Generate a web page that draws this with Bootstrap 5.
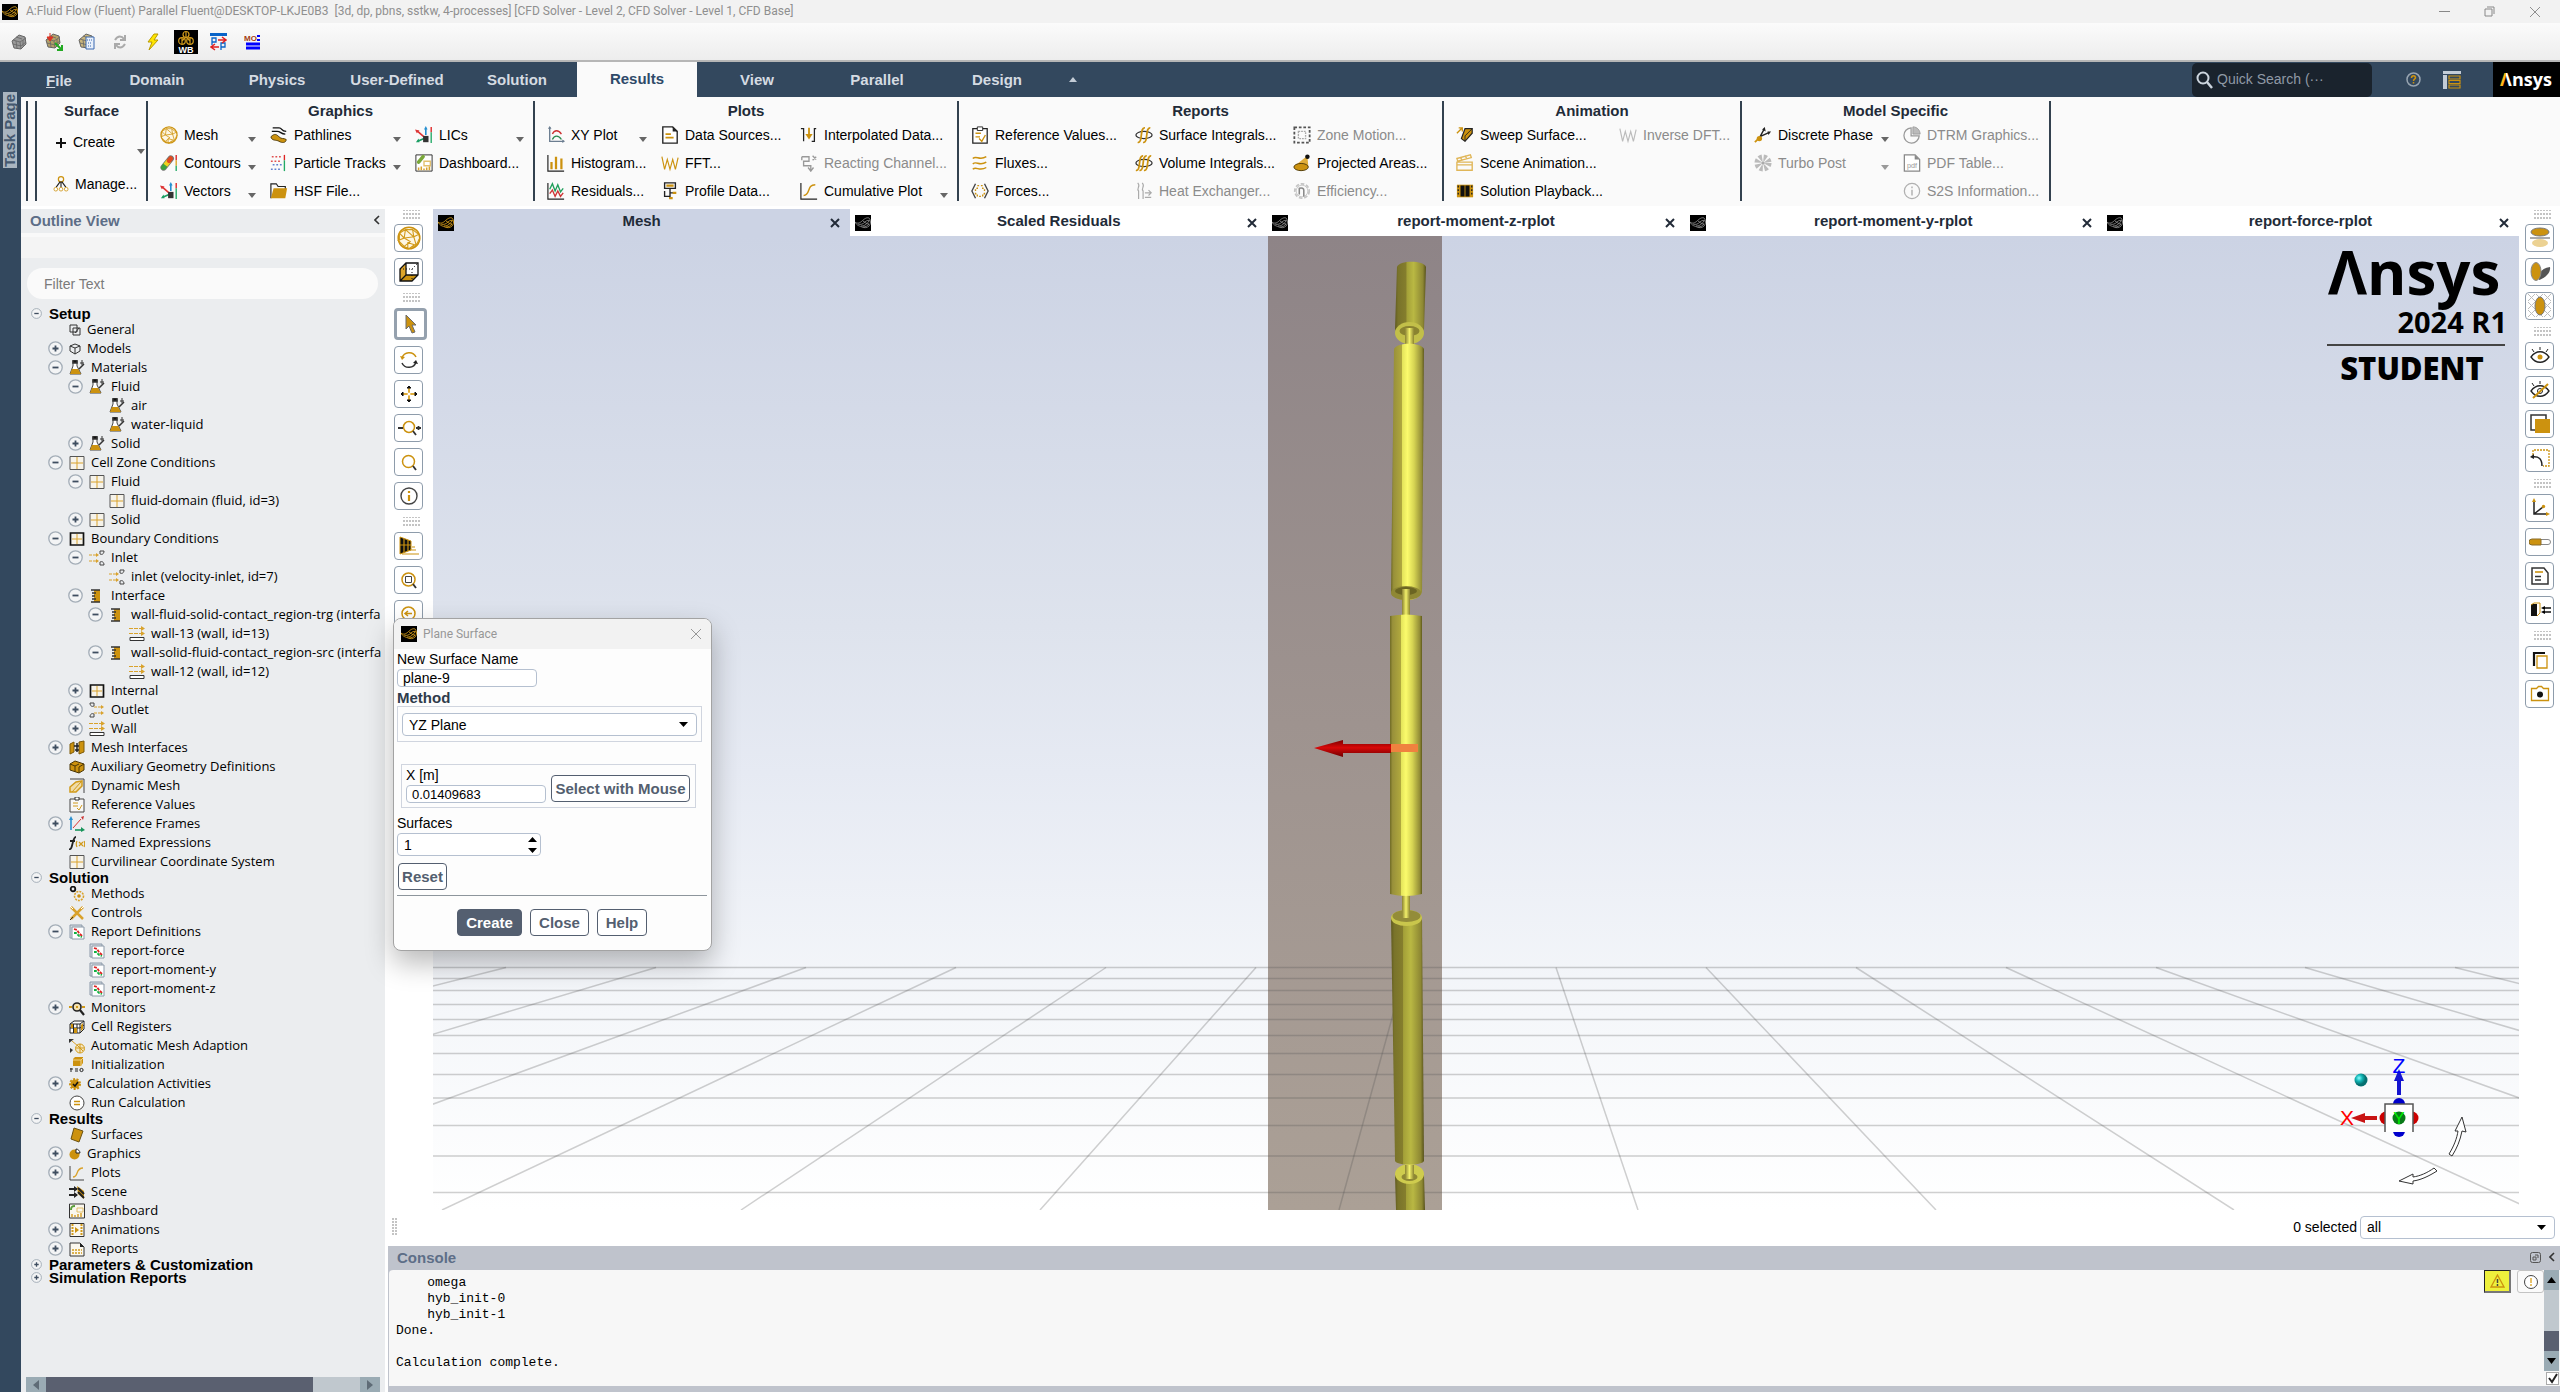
<!DOCTYPE html>
<html lang="en">
<head>
<meta charset="utf-8">
<meta name="viewport" content="width=device-width, initial-scale=1">
<title>A:Fluid Flow (Fluent) Parallel Fluent</title>
<link href="https://cdn.jsdelivr.net/npm/bootstrap@5.3.0/dist/css/bootstrap.min.css" rel="stylesheet">
<style>
:root{--navy:#33485e;--gold:#cc920f;--ink:#222b38;--slate:#545f70}
html,body{height:100%}
body{font-family:"Liberation Sans",Arial,sans-serif;font-size:14px;line-height:19px;color:#000;background:#fff;overflow:hidden}
svg{display:block;flex:none}
button{font:inherit;color:inherit;background:none;border:0;padding:0}
.titlebar{height:23px;background:#f2f2f2;color:#8f8f8f;font-family:Roboto,sans-serif;font-size:12px;padding-left:2px}
.titlebar .winctl{gap:34px;padding-right:19px}
.quickbar{height:39px;background:linear-gradient(#fbfbfb,#ededed);border-bottom:2px solid #b6b6b6;padding:1px 0 0 9px}
.quickbar button{width:33px;display:flex;justify-content:center;align-items:center}
.quickbar button.lead-btn{width:20px;margin-right:8px}
.menubar{height:35px;background:var(--navy);color:#d5dbe2;font-size:15px;font-weight:700}
.menubar .nav-link{width:120px;height:35px;padding:0;line-height:36px;text-align:center;color:#d5dbe2}
.menubar .nav-link.file-link{width:76px;margin-left:21px;line-height:38px}
.menubar .nav-link.active{background:#fafafa;color:#2f4a69;line-height:34px}
.quick-search{width:180px;height:34px;background:#1a232d;border-radius:5px;padding-left:4px;gap:4px;margin-right:33px}
.quick-search input{background:none;border:0;outline:0;color:#8f99a5;font-size:14px;width:150px;padding:0}
.quick-search input::placeholder{color:#8f99a5;opacity:1}
.layout-btn{margin-left:21px}
.brand-box{width:67px;height:35px;background:#000;margin-left:32px}
.rail{width:21px;background:var(--navy)}
.rail button{writing-mode:vertical-rl;transform:rotate(180deg);width:14px;height:76px;line-height:14px;margin:-5px 0 0 3px;background:#a9b5c0;color:#44586f;font-size:15px;font-weight:700;text-align:center;white-space:nowrap}
.ribbon{height:109px;background:#fafafa;padding:4px 0 5px 5px;margin-bottom:3px}
.rgroup{border-right:2px solid #33414f}
.rgroup h2{font-size:15px;font-weight:700;line-height:20px;margin:0 0 0 -12px;color:var(--ink);text-align:center}
.rgrid{display:grid;grid-auto-flow:column;grid-template-rows:repeat(3,28px);column-gap:12px}
.rgrid button,.surf button{display:flex;align-items:center;gap:6px;white-space:nowrap;text-align:left}
.rgrid button:disabled{color:#8b8b8b}
.rgrid svg.car{margin:8px 2px 0 auto}
.g-surf{width:111px}.g-surf h2{margin-left:0}
.surf .create-btn{margin:12px 0 22px}.surf .surf-car{margin:28px 12px 0 auto}
.g-graph{padding:0 8px 0 12px;width:387px}.g-graph h2{margin-right:-8px}.g-graph .rgrid{grid-template-columns:98px 133px 111px}
.g-plot{padding-left:12px;width:424px}.g-plot .rgrid{grid-template-columns:102px 127px 150px}
.g-rep{padding-left:12px;width:485px}.g-rep .rgrid{grid-template-columns:152px 146px 140px}
.g-anim{padding-left:12px;width:298px}.g-anim .rgrid{grid-template-columns:151px 110px}
.g-model{padding-left:12px;width:309px}.g-model .rgrid{grid-template-columns:137px 134px}
.rule-start{width:11px;border-left:2px solid #33414f;border-right:2px solid #33414f}
.outline{width:364px;background:#ebedef}
.panel-head{height:24px;color:#5d6e87;font-size:15px;font-weight:700;padding:0 5px 2px 9px}
.outline-strip{height:25px;border-top:4px solid #f9f9f9;background:#f4f4f4}
.filter-box{height:31px;margin:10px 7px 6px 6px;border:0;border-radius:16px;background:#fafafa;padding:0 17px;font-size:14px;outline:0}
.filter-box::placeholder{color:#7b7b7b;opacity:1}
.tree{list-style:none;margin:0;padding:2px 6px 0 0;font-family:"Open Sans",sans-serif;font-size:13px;line-height:19px;overflow:hidden}
.tree li{display:flex;align-items:center;gap:6px;height:19px;white-space:nowrap}
.tree li.top{height:13px;padding-left:10px;gap:7px;font-family:"Liberation Sans",sans-serif;font-size:15px;font-weight:700;line-height:13px}
.tree .l1{padding-left:27px}.tree .l2{padding-left:47px}.tree .l3{padding-left:67px}
.tree .l1.leaf{padding-left:48px}.tree .l2.leaf{padding-left:68px}.tree .l3.leaf{padding-left:88px}.tree .l4.leaf{padding-left:108px}
.hscroll{height:15px;margin:0 5px;background:#c0c8ce}
.hscroll button{width:20px;background:#9aabb4;display:flex;align-items:center;justify-content:center}
.thumb-x{width:267px;background:#5a6070}
.toolcol{width:48px;padding:0 0 0 9px;gap:6px}
.toolcol .grip{margin:1px 0 -1px 9px;height:10px}
.toolcol.rightcol{width:41px;padding-left:6px}
.toolcol .grip:first-child{margin-bottom:-2px}
.toolcol button{width:29px;height:28px;flex:none;border:1px solid #8e9cab;border-radius:4px;background:#fff;display:flex;align-items:center;justify-content:center}
.toolcol button.active{width:33px;height:32px;border:3px solid #95a1ae}
.grip{width:18px;height:6px;background:radial-gradient(circle at 1px 1px,#c4c4c4 1px,transparent 1px) 0 3px/3px 4px;}
.vtabs{height:27px}
.vtab{flex:1 1 0;padding:0 9px 0 5px;font-size:15px;font-weight:700;color:var(--ink)}
.vtab.active{background:#ccd3e4}
.vtab svg{position:relative}
.vtab .ttl{flex:1;text-align:center;line-height:22px;padding-bottom:3px}
.scene{flex:1 1 0;min-height:0;width:100%}
.statusrow{height:36px;padding:0 5px 2px 7px}
.statusrow .gripv{width:6px;height:18px;background:radial-gradient(circle at 1px 1px,#c4c4c4 1px,transparent 1px) 0 0/3px 3px}
.plain-select,.plain-field{border:1px solid #b5c0d0;border-radius:4px;background-color:#fff;color:#000;font-size:14px;line-height:16px;height:18px;padding:0 5px;outline:0}
.plain-select{appearance:none;height:23px;padding-left:6px;background-image:url("data:image/svg+xml,%3Csvg xmlns='http://www.w3.org/2000/svg' width='9' height='5'%3E%3Cpath d='M0 0h9L4.500 5z'/%3E%3C/svg%3E");background-repeat:no-repeat;background-position:right 8px center}
.statusrow .plain-select{width:195px;margin-left:3px}
.console{margin-left:3px;height:146px;background:#bfc3cc;padding:0 0 6px 1px}
.console-body{background:#f7f7f7;border-radius:4px 0 0 0;padding-right:1px}
.console pre{margin:0;padding:5px 0 0 7px;font-family:"Liberation Mono",monospace;font-size:13px;line-height:16px;color:#000;overflow:hidden}
.msg-btn{width:27px;height:23px;display:flex;align-items:center;justify-content:center;border-radius:3px}
.msg-warn{background:#eef03c;border:1px solid #222;border-right:2px solid #777;border-bottom:2px solid #777;border-radius:0;margin-right:6px}
.msg-info{border:1px solid #c3c3c3;background:#fafafa}
.vscroll{width:15px;height:101px;background:#c0c8ce}
.vscroll button{height:20px;background:#9aabb4;display:flex;align-items:center;justify-content:center}
.thumb-y{height:20px;margin-top:auto;background:#5a6070}
.tickbox{appearance:none;width:13px;height:13px;margin:1px 0 0 2px;border:1px solid #aaa;background:#fff url("data:image/svg+xml,%3Csvg xmlns='http://www.w3.org/2000/svg' width='11' height='11'%3E%3Cpath d='M2 5l3 4 5-8' fill='none' stroke='%23222' stroke-width='2'/%3E%3C/svg%3E")}
.dlg{position:absolute;left:393px;top:618px;width:319px;background:#fdfdfd;border:1px solid #a3a3a3;border-radius:8px;box-shadow:0 12px 28px rgba(0,0,0,.28);z-index:5;overflow:hidden}
.dlg-title{height:30px;background:#f2f2f2;color:#979797;font-family:Roboto,sans-serif;font-size:12px;padding:0 9px 0 7px;gap:6px}
.dlg-body{padding:1px 4px 14px 3px}
.dlg label,.dlg .lbl{display:block;line-height:19px}
.dlg .lbl{font-weight:700;font-size:15px;color:#2f3b4b;padding-top:3px;line-height:16px}
.dlg .plain-field{width:140px;display:block}
.boxed{border:1px solid #d0d5df}
.box-method{width:305px;padding:6px 4px 5px}
.box-method .plain-select{width:100%;display:block}
.box-x{width:295px;margin:22px 0 6px 4px;padding:1px 4px 4px}
.box-x .w-mouse{margin:0 0 1px 5px}
.plain-field.digits{font-size:13px}
.dlg .plain-field.spin{width:144px;height:23px;padding-left:6px;appearance:textfield;background:#fff url("data:image/svg+xml,%3Csvg xmlns='http://www.w3.org/2000/svg' width='9' height='16'%3E%3Cpath d='M0 5h9L4.500 0zM0 11h9L4.500 16z'/%3E%3C/svg%3E") no-repeat right 3px center}
.spin::-webkit-inner-spin-button{appearance:none;margin:0}
.dbtn{height:27px;border:1px solid var(--slate);border-radius:4px;background:#fff;color:var(--slate);font-size:15px;font-weight:700;line-height:25px;padding:0;white-space:nowrap}
.dbtn.prime{background:var(--slate);color:#fff}
.dlg hr{margin:5px 0 13px;opacity:1;border-top:1px solid #8d959c;width:310px}
.w-mouse{width:139px}.w-reset{width:49px;margin:7px 0 0 1px}.w-create{width:65px}.w-close{width:59px}.w-help{width:50px}
</style>
<script src="https://cdn.jsdelivr.net/npm/bootstrap@5.3.0/dist/js/bootstrap.bundle.min.js"></script>
</head>
<body class="d-flex flex-column">
<svg width="0" height="0" class="position-absolute" aria-hidden="true">
<defs>
<symbol id="logo" viewBox="0 0 16 16"><path fill="#000" d="M0 0h16v16H0z"/><path d="M0 7c2 2 5 1 7-1s5-4 7-3c2 2 2 6 0 8s-5 2-7 1-5-1-7-5M3 9c3 1 5 0 7-2s4-2 5-1M6 11c3 0 5-1 8-5M8 12c3 0 4-1 6-3M8 6c2 1 3 3 6 3" fill="none" stroke="currentColor" stroke-width=".9"/></symbol>
<symbol id="x" viewBox="0 0 12 12"><path d="M1 1l10 10M11 1L1 11" fill="none" stroke="currentColor"/></symbol>
<symbol id="xb" viewBox="0 0 12 12"><path d="M2 2l8 8M10 2l-8 8" fill="none" stroke="currentColor" stroke-width="2"/></symbol>
<symbol id="caret" viewBox="0 0 8 5"><path d="M0 0h8L4 5z" fill="currentColor"/></symbol>
<symbol id="lt" viewBox="0 0 6 10"><path d="M5 1L1 5l4 4" fill="none" stroke="#333" stroke-width="1.600"/></symbol>
<symbol id="plus" viewBox="0 0 15 15"><circle cx="7.500" cy="7.500" r="6.700" fill="#f3f4f5" stroke="#a3adb7" stroke-width="1.300"/><path d="M4.500 7.500h6M7.500 4.500v6" stroke="#3f4e60" stroke-width="1.800"/></symbol>
<symbol id="minus" viewBox="0 0 15 15"><circle cx="7.500" cy="7.500" r="6.700" fill="#f3f4f5" stroke="#a3adb7" stroke-width="1.300"/><path d="M4.500 7.500h6" stroke="#3f4e60" stroke-width="1.800"/></symbol>
<!-- tree icons -->
<symbol id="t-gen" viewBox="0 0 12 12"><path d="M1 1h7v7H1zM4 4h7v7H4z" fill="none" stroke="#333"/><path d="M6 9l4-5" stroke="#333"/></symbol>
<symbol id="t-cube" viewBox="0 0 12 12"><path d="M6 1l5 2v5l-5 3-5-3V3zM1 3l5 2 5-2M6 5v6" fill="none" stroke="#333"/></symbol>
<symbol id="t-flask" viewBox="0 0 16 16"><path d="M4 1h4v5l4 8H1l3-8z" fill="#fff" stroke="#444"/><path d="M3 9h6l3 5H1z" fill="#cc920f"/><path d="M4 0h4v3H4zM10 9l5-5" fill="#111" stroke="#333" stroke-width="1.500"/><path d="M13 0v5M11 3h4" stroke="#333"/></symbol>
<symbol id="t-zone" viewBox="0 0 16 16"><path d="M1 1.500h14v13H1z" fill="#f6f3ea" stroke="#555"/><path d="M8 2v12M2 8h12" stroke="#d9a22c"/></symbol>
<symbol id="t-bound" viewBox="0 0 16 16"><path d="M1.500 2h13v12h-13z" fill="#f6f3ea" stroke="#111" stroke-width="1.700"/><path d="M8 3v10M3 8h10" stroke="#d9a22c"/></symbol>
<symbol id="t-in" viewBox="0 0 16 16"><path d="M0 5h8M0 11h8" stroke="#d9a22c" stroke-dasharray="3 1"/><path d="M7 3l3 2-3 2zM7 9l3 2-3 2z" fill="#d9a22c"/><path d="M11 1h4c0 3-2 4-4 3zM11 15h4c0-3-2-4-4-3z" fill="none" stroke="#444"/></symbol>
<symbol id="t-out" viewBox="0 0 16 16"><path d="M5 5h8M5 11h8" stroke="#d9a22c" stroke-dasharray="3 1"/><path d="M12 3l3 2-3 2zM12 9l3 2-3 2z" fill="#d9a22c"/><path d="M5 1H1c0 3 2 4 4 3zM5 15H1c0-3 2-4 4-3z" fill="none" stroke="#444"/></symbol>
<symbol id="t-intf" viewBox="0 0 16 16"><path d="M5 2h6v12H5z" fill="#cc920f"/><path d="M2 2h9M2 14h9M3 5h4M3 11h4M3 8h3" stroke="#333" stroke-width="1.300"/></symbol>
<symbol id="t-wall" viewBox="0 0 16 16"><path d="M0 2.500h12M0 7.500h12" stroke="#d9a22c" stroke-dasharray="4 1"/><path d="M12 0l4 2.500-4 2.500zM12 5l4 2.500-4 2.500z" fill="#d9a22c"/><path d="M1 11.500h14v3H1z" fill="#fff" stroke="#333"/></symbol>
<symbol id="t-mi" viewBox="0 0 16 16"><path d="M1 4l4-2v10l-4 2zM10 2l5-1v11l-5 2z" fill="#cc920f" stroke="#7c5a0a"/><path d="M5 6h5M6 10h4M8 3v9" stroke="#222" stroke-width="1.500"/></symbol>
<symbol id="t-aux" viewBox="0 0 16 16"><path d="M1 5l5-3 9 3v6l-5 3-9-3z" fill="#cc920f" stroke="#4b3707"/><path d="M1 5l5 2v6M6 7l4-2M10 8v6M10 8l5-3" fill="none" stroke="#4b3707"/></symbol>
<symbol id="t-dyn" viewBox="0 0 16 16"><path d="M1 1h14v14" fill="none" stroke="#444"/><path d="M1 9l6-5 6-1v5l-6 6H1z" fill="#f0dca8" stroke="#d19a1a" stroke-width="1.500"/><path d="M3 14l9-10" stroke="#d19a1a"/></symbol>
<symbol id="t-clip" viewBox="0 0 16 16"><path d="M1 2h14v13H1z" fill="#f7f7f7" stroke="#444"/><path d="M6 0h4v3H6z" fill="#fff" stroke="#333"/><path d="M4 6h5M4 9h5" stroke="#d19a1a"/><path d="M8 11l2 2 3-5" fill="none" stroke="#d19a1a"/></symbol>
<symbol id="t-frame" viewBox="0 0 16 16"><path d="M2 2v12" stroke="#2a8fd0" stroke-width="1.600"/><path d="M6 14h8" stroke="#17945a" stroke-width="1.600"/><path d="M4 12l8-9" stroke="#d33"/><path d="M0 4l2-4 2 4z" fill="#2a8fd0"/><path d="M12 1l3-1-1 4z" fill="#c33"/><path d="M12 11l4 3-4 2z" fill="#17945a"/></symbol>
<symbol id="t-fx" viewBox="0 0 16 16"><path d="M0 14c4 2 3-12 7-12M1 6h5" fill="none" stroke="#222" stroke-width="1.800"/><path d="M8 6c-1 2-1 4 0 6M15 6c1 2 1 4 0 6M10 7l4 4M14 7l-4 4" fill="none" stroke="#d19a1a" stroke-width="1.200"/></symbol>
<symbol id="t-gears" viewBox="0 0 16 16"><circle cx="4" cy="3" r="2.300" fill="none" stroke="#111" stroke-width="1.800"/><circle cx="10" cy="10" r="4.500" fill="none" stroke="#d9a22c" stroke-width="1.600" stroke-dasharray="2 1"/><circle cx="10" cy="10" r="1.800" fill="#cc920f"/></symbol>
<symbol id="t-tools" viewBox="0 0 16 16"><path d="M2 2l12 12M14 2L2 14" stroke="#d9a22c" stroke-width="2.500"/><path d="M1 1l3 3M12 4l3-3" stroke="#fff"/><path d="M1 15l3-3" stroke="#333"/></symbol>
<symbol id="t-rep" viewBox="0 0 16 16"><path d="M1 1h12v13H1z" fill="#d5dbe1" stroke="#8b99a8"/><path d="M3 3h12v12H3z" fill="#fff" stroke="#8b99a8"/><path d="M5 5l3 1 2 3 3 3" fill="none" stroke="#e02020" stroke-width="1.800" stroke-dasharray="3 1"/><path d="M5 9l2 0 3 3 3 1" fill="none" stroke="#10b040" stroke-width="1.800" stroke-dasharray="3 1"/></symbol>
<symbol id="t-mon" viewBox="0 0 16 16"><circle cx="8" cy="7" r="4" fill="#f3e1b0" stroke="#222" stroke-width="1.600"/><path d="M11 10l4 5" stroke="#222" stroke-width="2.200"/><path d="M0 7h3M13 7h3M7 7h2" stroke="#d19a1a" stroke-width="2"/></symbol>
<symbol id="t-cell" viewBox="0 0 16 16"><path d="M1 5l4-3h10v8l-4 4H1z" fill="#fff" stroke="#222"/><path d="M1 5h10v9M11 5l4-3M4.500 5v9M8 5v9M1 9h10l4-3" fill="none" stroke="#222"/><path d="M5 9h3v5H5zM2 5h2v4H2zM12 6l2-2v6l-2 2z" fill="#cc920f"/></symbol>
<symbol id="t-ama" viewBox="0 0 16 16"><path d="M0 1h5l-5 4zM1 10l3 2-3 3z" fill="#333"/><path d="M3 3l6 5" stroke="#d9a22c"/><circle cx="11" cy="10.500" r="4.500" fill="#f4e6c2" stroke="#d19a1a"/><path d="M7 10h8M11 6v9M8 7l6 6" stroke="#d19a1a"/></symbol>
<symbol id="t-init" viewBox="0 0 16 16"><path d="M4 2l2-2h8v6l-2 3H4z" fill="#cc920f"/><path d="M4 3h8v6M12 3l2-2" fill="none" stroke="#f3d488"/><path d="M2 11v4M1 12h3M6 12h3M6 14h3" stroke="#222"/><circle cx="12.500" cy="13" r="1.600" fill="none" stroke="#222"/></symbol>
<symbol id="t-act" viewBox="0 0 12 12"><circle cx="6" cy="6" r="4.500" fill="#cc920f"/><circle cx="6" cy="6" r="5" fill="none" stroke="#cc920f" stroke-width="2" stroke-dasharray="2 1.500"/><path d="M4 6l2 2 3-4" fill="none" stroke="#111" stroke-width="1.500"/></symbol>
<symbol id="t-run" viewBox="0 0 16 16"><circle cx="8" cy="8" r="7" fill="#fff" stroke="#444"/><path d="M5 6.500h6M5 9.500h6" stroke="#cc920f" stroke-width="1.500"/></symbol>
<symbol id="t-surf" viewBox="0 0 16 16"><path d="M5 1l9 3-4 11-8-3z" fill="#cc920f" stroke="#6b5212"/></symbol>
<symbol id="t-graph" viewBox="0 0 12 12"><circle cx="5.500" cy="6.500" r="5" fill="#cc920f"/><path d="M7 1v4h4c0-2-2-4-4-4z" fill="#fff" stroke="#222"/></symbol>
<symbol id="t-plot" viewBox="0 0 16 16"><path d="M1 1v14h14" fill="none" stroke="#444"/><path d="M4 12c6 0 2-9 10-9" fill="none" stroke="#d9a22c" stroke-width="1.300"/></symbol>
<symbol id="t-scene" viewBox="0 0 16 16"><path d="M0 5h8M0 11h8" stroke="#222" stroke-width="1.800"/><path d="M5 2l4 3-4 3zM5 8l4 3-4 3z" fill="#222"/><path d="M8 2l7 5v8l-6-5z" fill="#cc920f"/><path d="M9 4l6 6M9 8l6 6" stroke="#222" stroke-width="2"/></symbol>
<symbol id="t-dash" viewBox="0 0 16 16"><path d="M.5 1h15v14H.5z" fill="#faf7ee" stroke="#333"/><path d="M2 7c0-4 2-4 4-4" fill="none" stroke="#5a9e3a" stroke-width="2"/><path d="M8 5h6v4H8z" fill="none" stroke="#e2c06d"/><path d="M3 14v-3M6 14v-2M9 14v-3M12 14v-4" stroke="#d9a22c" stroke-width="1.500"/></symbol>
<symbol id="t-anim" viewBox="0 0 16 16"><path d="M1 1.500h14v13H1z" fill="#faf7ee" stroke="#333"/><path d="M3.500 2v12M12.500 2v12" stroke="#d19a1a" stroke-width="2" stroke-dasharray="2 1"/><path d="M6 5l4 3-4 3z" fill="#cc920f"/></symbol>
<symbol id="t-table" viewBox="0 0 16 16"><path d="M1 2h10l4 4v9H1z" fill="#faf7ee" stroke="#333"/><path d="M11 2v4h4z" fill="#222"/><path d="M3 9h10M3 12h10" stroke="#d19a1a" stroke-width="1.600" stroke-dasharray="2 1"/></symbol>
<!-- ribbon icons -->
<symbol id="r-mesh" viewBox="0 0 20 20"><circle cx="10" cy="10" r="9" fill="#fdf6e3" stroke="#cc920f" stroke-width="1.300"/><path d="M2 6l5-3 6 0 5 4-4 2-7-6-1 7-5 2 5 5 5-4-5-3 8-1 2 7-7-2 0 5 7-3 3-6M2 6l4 4M6 17l4 2 4-3M13 3l1 6M2 12V6" fill="none" stroke="#d19a1a" stroke-width=".9"/></symbol>
<symbol id="r-cont" viewBox="0 0 20 20"><path d="M4 15L12 5" stroke="#777" stroke-width="7" stroke-linecap="round"/><path d="M4 15L6 12" stroke="#3ba23f" stroke-width="5.500" stroke-linecap="round"/><path d="M6 12.500l4-5" stroke="#f0d020" stroke-width="5.500"/><path d="M10 7.500L12 5" stroke="#e04a20" stroke-width="5" stroke-linecap="round"/><path d="M18 1v6" stroke="#d22" stroke-width="1.500"/><path d="M18 7v6" stroke="#dba520" stroke-width="1.500"/><path d="M18 13v6" stroke="#2a6" stroke-width="1.500"/></symbol>
<symbol id="r-vec" viewBox="0 0 20 20"><path d="M10 14l-7 3" stroke="#1b9e63" stroke-width="1.800"/><path d="M1 18l3-4 1 4z" fill="#1b9e63"/><path d="M10 12L3 6" stroke="#d33" stroke-width="1.800"/><path d="M0 4l5 1-3 3z" fill="#d33"/><path d="M12 10V3" stroke="#268fd0" stroke-width="1.800"/><path d="M10 4l2-4 2 4z" fill="#268fd0"/><path d="M9 11h6v7H9z" fill="#333"/><path d="M18 1v6" stroke="#d22" stroke-width="1.500"/><path d="M18 7v12" stroke="#2a6" stroke-width="1.500"/></symbol>
<symbol id="r-path" viewBox="0 0 20 20"><path d="M3 2h7c4 0 2 4 8 4M2 6h6c4 0 4 3 9 3" fill="none" stroke="#111" stroke-width="1.500"/><path d="M1 12c4-4 6-3 9 0s5 1 8 3c0 4-5 4-8 2s-8 0-9-5z" fill="#cc920f" stroke="#4b3707"/></symbol>
<symbol id="r-part" viewBox="0 0 20 20"><path d="M2 3h10M1 8h10" stroke="#e05050" stroke-width="1.600" stroke-dasharray="2 2"/><path d="M3 12h10M1 17h11" stroke="#6080d0" stroke-width="1.600" stroke-dasharray="2 2"/><path d="M16 1v6" stroke="#d22" stroke-width="1.500"/><path d="M16 7v12" stroke="#2a6" stroke-width="1.500"/></symbol>
<symbol id="r-folder" viewBox="0 0 20 20"><path d="M1 18V2h6l2 3h8v3" fill="none" stroke="#222" stroke-width="1.300"/><path d="M4 7h15l-2 11H1z" fill="#cc920f"/></symbol>
<symbol id="r-dash" viewBox="0 0 20 20"><path d="M1 1h18v18H1z" fill="#fff" stroke="#222"/><path d="M4 9l5-6" stroke="#7aa83a" stroke-width="4" stroke-linecap="round"/><path d="M10 8h7v5h-7z" fill="none" stroke="#e2c06d" stroke-width="1.500"/><path d="M4 18v-3M7 18v-4M10 18v-2M13 18v-3M16 18v-4" stroke="#d9a22c" stroke-width="1.700"/></symbol>
<symbol id="r-xy" viewBox="0 0 20 20"><path d="M3 1v16h16" fill="none" stroke="#6b7d90" stroke-width="1.500"/><path d="M1 3l2-3 2 3zM17 15l3 2-3 2z" fill="#6b7d90"/><path d="M6 9c2-5 7-5 10 0" fill="none" stroke="#c33" stroke-width="1.500"/><path d="M6 15c2-5 7-5 10 0" fill="none" stroke="#2a8a50" stroke-width="1.500"/></symbol>
<symbol id="r-hist" viewBox="0 0 20 20"><path d="M1 1v18h18" fill="none" stroke="#222" stroke-width="1.300"/><path d="M5 17V9M10 17V3M16 17V5" stroke="#cc920f" stroke-width="2.500"/></symbol>
<symbol id="r-res" viewBox="0 0 20 20"><path d="M1 1v18h18" fill="none" stroke="#222" stroke-width="1.300"/><path d="M3 8l3-6 3 8 3-7 3 8 3-4" fill="none" stroke="#1f9e5a" stroke-width="1.500"/><path d="M3 13l3-4 3 7 3-6 3 6 3-4" fill="none" stroke="#c33" stroke-width="1.500"/></symbol>
<symbol id="r-data" viewBox="0 0 20 20"><path d="M2 1h11l5 5v13H2z" fill="#fff" stroke="#222" stroke-width="1.500"/><path d="M13 1v5h5z" fill="#222"/><path d="M5 9h6M5 13h9" stroke="#cc920f" stroke-width="2"/></symbol>
<symbol id="r-fft" viewBox="0 0 20 20"><path d="M1 3l3 14 3-11 3 11 3-11 3 11 3-13" fill="none" stroke="currentColor" stroke-width="1.300"/></symbol>
<symbol id="r-prof" viewBox="0 0 20 20"><path d="M4 1h12v6H4zM10 7v11M4 10v6h6M10 12h6" fill="none" stroke="#222" stroke-width="1.500"/><path d="M6 4h8M13 12h4M9 18h4" stroke="#cc920f" stroke-width="2.500"/></symbol>
<symbol id="r-interp" viewBox="0 0 20 20"><path d="M1 3h3v14M18 3h-2v14h-3" fill="none" stroke="#222" stroke-width="1.400"/><path d="M10 2v10" stroke="#cc920f" stroke-width="2"/><path d="M6 9l4 6 4-6z" fill="#cc920f"/></symbol>
<symbol id="r-react" viewBox="0 0 20 20"><path d="M2 3h8v5H4v5h8v5M2 7V3M14 2l4 4M14 7l4-4M9 15l3 4 3-4" fill="none" stroke="#999" stroke-width="1.500"/></symbol>
<symbol id="r-cum" viewBox="0 0 20 20"><path d="M1 1v18h18" fill="none" stroke="#222" stroke-width="1.300"/><path d="M4 15c8 0 3-12 13-12" fill="none" stroke="#cc920f" stroke-width="1.600"/></symbol>
<symbol id="r-clip" viewBox="0 0 20 20"><path d="M2 3h16v16H2z" fill="#fff" stroke="#222" stroke-width="1.400"/><path d="M7 1h6v4H7z" fill="#fff" stroke="#222"/><path d="M5 8h6M5 12h5" stroke="#cc920f" stroke-width="1.500"/><path d="M9 14l3 3 4-7" fill="none" stroke="#cc920f" stroke-width="1.500"/></symbol>
<symbol id="r-flux" viewBox="0 0 20 20"><path d="M2 5c4-4 7 3 15-2M2 11c4-4 7 3 15-2M2 17c4-4 7 3 15-2" fill="none" stroke="#cc920f" stroke-width="1.600"/></symbol>
<symbol id="r-force" viewBox="0 0 20 20"><path d="M5 2L1 10l4 8M15 2l4 8-4 8" fill="none" stroke="#444" stroke-width="1.500"/><path d="M7 4h6v3h2v6h-2v3H7v-3H5V7h2z" fill="none" stroke="#cc920f" stroke-dasharray="2 2" stroke-width="1.500"/></symbol>
<symbol id="r-sint" viewBox="0 0 20 20"><ellipse cx="10" cy="10" rx="9" ry="4" fill="none" stroke="#333" stroke-width="1.400"/><path d="M3 18c6 2 2-17 8-16M9 18c6 2 2-17 8-16" fill="none" stroke="#cc920f" stroke-width="1.900"/></symbol>
<symbol id="r-vint" viewBox="0 0 20 20"><ellipse cx="10" cy="10" rx="9" ry="4" fill="none" stroke="#333" stroke-width="1.400"/><path d="M1 18c6 2 2-17 8-16M5 18c6 2 2-17 8-16M10 18c6 2 2-17 8-16" fill="none" stroke="#cc920f" stroke-width="1.900"/></symbol>
<symbol id="r-heat" viewBox="0 0 20 20"><path d="M3 1c4 4-2 6 1 9v9M8 1c4 4-2 6 1 9v9M11 12h7M11 17h7M15 9l3 3-3 3" fill="none" stroke="#aaa" stroke-width="1.300"/></symbol>
<symbol id="r-zone" viewBox="0 0 20 20"><path d="M1.500 1.500h17v17h-17z" fill="none" stroke="#555" stroke-width="2" stroke-dasharray="3 2"/><path d="M6 6h8v8H6z" fill="none" stroke="#aaa" stroke-width="1.500" stroke-dasharray="2 1"/></symbol>
<symbol id="r-proj" viewBox="0 0 20 20"><path d="M16 2L1 14c1 6 15 6 16 0z" fill="#e0ad3a"/><ellipse cx="9" cy="14.500" rx="8" ry="4" fill="#cc920f" stroke="#4b3707"/><circle cx="16" cy="3" r="2.500" fill="#111"/></symbol>
<symbol id="r-eff" viewBox="0 0 20 20"><circle cx="10" cy="10" r="8" fill="none" stroke="#c4c4c4" stroke-width="2" stroke-dasharray="4 2"/><circle cx="10" cy="10" r="6.500" fill="none" stroke="#c4c4c4"/><path d="M7 14V7c3-1 5 0 5 2v7" fill="none" stroke="#888" stroke-width="1.700"/></symbol>
<symbol id="r-sweep" viewBox="0 0 20 20"><path d="M10 3h8v5l-8 9-4-3z" fill="#cc920f" stroke="#222" stroke-width="1.300"/><path d="M10 17V11l8-8" fill="none" stroke="#222"/><path d="M1 8l6-6M3 2h4v4" fill="none" stroke="#cc920f" stroke-width="1.500"/></symbol>
<symbol id="r-clap" viewBox="0 0 20 20"><path d="M1 9h17v9H1zM1 5l15-4 1 3L2 8zM1 12h17" fill="none" stroke="#e0b658" stroke-width="1.500"/><path d="M5 4l2 3M10 2l2 3" stroke="#e0b658" stroke-width="1.500"/></symbol>
<symbol id="r-film" viewBox="0 0 20 20"><path d="M1 3h18v14H1z" fill="#cc920f"/><path d="M5 4h4.500v12H5zM10.500 4H15v12h-4.500z" fill="#111"/><path d="M2.500 4v12M17.500 4v12" stroke="#222" stroke-width="1.500" stroke-dasharray="2 2"/></symbol>
<symbol id="r-disc" viewBox="0 0 20 20"><path d="M5 15l6-11M6 12l11-5" stroke="#222" stroke-width="1.600"/><path d="M9 4l3-3 1 5zM15 6l4 0-3 4z" fill="#222"/><circle cx="6" cy="14" r="3" fill="#cc920f"/><path d="M1 18l4-4" stroke="#cc920f" stroke-width="2"/></symbol>
<symbol id="r-turbo" viewBox="0 0 20 20"><circle cx="10" cy="10" r="6" fill="none" stroke="#bbb" stroke-width="7" stroke-dasharray="3 1.700"/><circle cx="10" cy="10" r="2" fill="#aaa"/></symbol>
<symbol id="r-pie" viewBox="0 0 20 20"><path d="M9 2a8.500 8.500 0 1 0 9 9H9z" fill="none" stroke="#999" stroke-width="1.400"/><path d="M11 1c5 0 8 4 8 8h-8z" fill="#bbb" stroke="#999"/></symbol>
<symbol id="r-pdf" viewBox="0 0 20 20"><path d="M1.500 1h12l5 5v13h-17z" fill="#fff" stroke="#888" stroke-width="1.400"/><path d="M13 1v5h5z" fill="#888"/><text x="10" y="15" font-size="8" text-anchor="middle" fill="#999" font-family="Liberation Sans">pdf</text></symbol>
<symbol id="r-info" viewBox="0 0 20 20"><circle cx="10" cy="10" r="8.500" fill="none" stroke="#b0b0b0" stroke-width="1.400"/><path d="M10 8.500V15M10 5v2" stroke="#b0b0b0" stroke-width="1.600"/></symbol>
<symbol id="r-manage" viewBox="0 0 20 20"><circle cx="10" cy="4" r="3.300" fill="none" stroke="#cc920f" stroke-width="1.500"/><path d="M9 7L4 14M10 7v7M11 7l5 7" stroke="#222" stroke-width="1.400"/><circle cx="3.500" cy="16.500" r="2.300" fill="#fff" stroke="#cc920f"/><circle cx="10" cy="16.500" r="2.300" fill="#fff" stroke="#cc920f"/><circle cx="16.500" cy="16.500" r="2.300" fill="#fff" stroke="#cc920f"/></symbol>
<symbol id="q-cube" viewBox="0 0 16 16"><path d="M8 1l6 2 1 7-5 5-7-1-2-7z" fill="currentColor" stroke="#666"/><path d="M2 6l7 2 6-4M9 8l1 7M5 3l6 2M5 7l1 7M12 6l0 6M2 10l8 2 5-4" fill="none" stroke="#666" stroke-width=".8"/></symbol>
<linearGradient id="sky" x1="0" y1="0" x2="0" y2="1"><stop offset="0" stop-color="#ccd3e4"/><stop offset=".4" stop-color="#dee3ed"/><stop offset=".55" stop-color="#e6eaf3"/><stop offset=".8" stop-color="#f5f7fa"/><stop offset="1" stop-color="#fff"/></linearGradient>
<linearGradient id="pln" x1="0" y1="0" x2="0" y2="1"><stop offset="0" stop-color="#8e8487"/><stop offset=".5" stop-color="#9e938f"/><stop offset="1" stop-color="#aba096"/></linearGradient>
<linearGradient id="cy"><stop offset="0" stop-color="#6f6a26"/><stop offset=".08" stop-color="#98903a"/><stop offset=".33" stop-color="#b0a83e"/><stop offset=".34" stop-color="#e3e35a"/><stop offset=".5" stop-color="#fbfb6c"/><stop offset=".7" stop-color="#d6d453"/><stop offset=".93" stop-color="#928c36"/><stop offset="1" stop-color="#5f5a1c"/></linearGradient>
<linearGradient id="cyd"><stop offset="0" stop-color="#5f5a1f"/><stop offset=".1" stop-color="#79732a"/><stop offset=".36" stop-color="#857e2d"/><stop offset=".38" stop-color="#a3a038"/><stop offset=".6" stop-color="#b9b843"/><stop offset=".9" stop-color="#8d8733"/><stop offset="1" stop-color="#56511a"/></linearGradient>
<linearGradient id="rod"><stop offset="0" stop-color="#8a8232"/><stop offset=".5" stop-color="#f2f06a"/><stop offset="1" stop-color="#8a8232"/></linearGradient>
<linearGradient id="red" x1="0" y1="0" x2="0" y2="1"><stop offset="0" stop-color="#7a0000"/><stop offset=".45" stop-color="#d80808"/><stop offset="1" stop-color="#6e0000"/></linearGradient>
<radialGradient id="teal" cx=".35" cy=".35"><stop offset="0" stop-color="#8ff"/><stop offset=".5" stop-color="#12b5b5"/><stop offset="1" stop-color="#067070"/></radialGradient>
<linearGradient id="amark"><stop offset=".5" stop-color="#ffb71b"/><stop offset=".5" stop-color="#fff"/></linearGradient>
</defs>
</svg>

<header>
<div class="titlebar d-flex align-items-center">
<svg width="16" height="16" color="#d19a1a"><use href="#logo"/></svg>
<span class="ms-2 text-nowrap">A:Fluid Flow (Fluent) Parallel Fluent@DESKTOP-LKJE0B3&nbsp; [3d, dp, pbns, sstkw, 4-processes] [CFD Solver - Level 2, CFD Solver - Level 1, CFD Base]</span>
<div class="winctl d-flex align-items-center ms-auto">
<button aria-label="Minimize"><svg width="11" height="11"><path d="M0 5.500h11" stroke="#888"/></svg></button>
<button aria-label="Restore"><svg width="11" height="11"><path d="M1 3h7v7H1zM3 1h7v7" fill="none" stroke="#888"/></svg></button>
<button aria-label="Close"><svg width="12" height="12"><use href="#x"/></svg></button>
</div>
</div>
<div class="quickbar d-flex">
<button class="lead-btn" aria-label="Geometry"><svg width="16" height="16" color="#9a9a9a"><use href="#q-cube"/></svg></button>
<button aria-label="Import"><svg width="18" height="18" color="#b4a169"><use href="#q-cube" width="16" height="16"/><path d="M5 0v6M2 4l3 4 3-4z" fill="#d32" stroke="#d32"/><path d="M10 10l6 6M17 12v5h-5" fill="none" stroke="#2a2" stroke-width="2"/></svg></button>
<button aria-label="Case"><svg width="18" height="18" color="#c9b57c"><use href="#q-cube" width="16" height="16"/><path d="M8 4h8v12H8z" fill="#e8f0fb" stroke="#3a68b0"/><path d="M9 7h6M10 10h4M10 13h4" stroke="#3a68b0" stroke-dasharray="1 1"/></svg></button>
<button aria-label="Refresh"><svg width="16" height="16"><path d="M3 6c3-5 7-4 9-1M13 10c-3 5-7 4-9 1M13 1v5H8M3 15v-5h5" fill="none" stroke="#aaa" stroke-width="2"/></svg></button>
<button aria-label="Update"><svg width="14" height="18"><path d="M8 1L2 9h4l-3 8 9-10H8l4-6z" fill="#ffe600" stroke="#b89a00"/></svg></button>
<button aria-label="Workbench"><svg width="24" height="24"><path d="M0 0h24v24H0z"/><g fill="none" stroke="#d19a1a" stroke-width="1.200"><circle cx="12" cy="4.500" r="3"/><circle cx="8" cy="11" r="3.300"/><circle cx="16" cy="11" r="3.300"/><path d="M12 2v5l-4 4M12 7l4 4M8 8v6M16 8v6"/></g><text x="12" y="23" fill="#fff" font-size="9" font-weight="700" text-anchor="middle" font-family="Liberation Sans">WB</text></svg></button>
<button aria-label="Parameters"><svg width="17" height="18"><path d="M0 0h17v3H0z" fill="#0a64c8"/><path d="M2 12V5h4v4H2M11 17v-7h4v4h-4" fill="none" stroke="#0a64c8" stroke-width="1.300"/><path d="M8 7h7M2 14h7M12 4l4 3-4 3M5 11l-4 3 4 3" fill="none" stroke="#e02020" stroke-width="1.400"/></svg></button>
<button aria-label="Monitors"><svg width="16" height="18"><text x="0" y="8" fill="#a33c10" font-size="8" font-weight="700" font-family="Liberation Sans">MO</text><path d="M13 3h3M13 7h3" stroke="#00f" stroke-width="2"/><path d="M2 11h14M2 15h14" stroke="#00f" stroke-width="3"/></svg></button>
</div>
<nav class="menubar d-flex align-items-center">
<a class="nav-link file-link" href="#"><u>F</u>ile</a>
<a class="nav-link" href="#">Domain</a><a class="nav-link" href="#">Physics</a><a class="nav-link" href="#">User-Defined</a><a class="nav-link" href="#">Solution</a><a class="nav-link active" href="#" aria-current="page">Results</a><a class="nav-link" href="#">View</a><a class="nav-link" href="#">Parallel</a><a class="nav-link" href="#">Design</a>
<button class="ms-2" aria-label="Collapse ribbon"><svg width="8" height="5" class="ms-1"><path d="M0 5h8L4 0z" fill="#c3ccd6"/></svg></button>
<label class="quick-search d-flex align-items-center ms-auto"><svg width="17" height="18"><circle cx="7" cy="7" r="5.500" fill="none" stroke="#ccd5de" stroke-width="2"/><path d="M11 11l5 6" stroke="#ccd5de" stroke-width="2.500"/></svg><input type="search" aria-label="Quick Search" placeholder="Quick Search (···"></label>
<button aria-label="Help"><svg width="17" height="17"><circle cx="8.500" cy="8.500" r="6.500" fill="none" stroke="#98a5b2" stroke-width="1.500"/><path d="M6.500 7c0-3 4-3 4 0 0 1-2 1-2 3M8.500 11v1.500" fill="none" stroke="#cc920f" stroke-width="1.500"/></svg></button>
<button class="layout-btn" aria-label="Layout"><svg width="18" height="18"><path d="M0 0h18v3H0zM0 4h4v14H0z" fill="#c3ccd6"/><path d="M6 5h11v3H6zM6 9.500h11v3H6zM6 14h11v3H6z" fill="none" stroke="#cc920f" stroke-width="1.200"/></svg></button>
<div class="brand-box"><svg width="67" height="35"><g font-family="Open Sans" font-weight="700" font-size="18"><text x="7" y="24" fill="url(#amark)">Λ</text><text x="19" y="24" fill="#fff">nsys</text></g></svg></div>
</nav>
</header>

<div class="d-flex flex-grow-1" style="min-height:0">
<aside class="rail flex-shrink-0"><button>Task Page</button></aside>
<div class="d-flex flex-column flex-grow-1" style="min-width:0">

<section class="ribbon d-flex flex-shrink-0">
<div class="rule-start flex-shrink-0"></div>
<div class="rgroup g-surf flex-shrink-0"><h2>Surface</h2>
<div class="surf d-flex">
<div class="d-flex flex-column ps-3">
<button class="create-btn"><svg width="14" height="16"><path d="M3 8h10M8 3v10" stroke="#111" stroke-width="2"/></svg>Create</button>
<button><svg width="16" height="20"><use href="#r-manage"/></svg>Manage...</button>
</div>
<svg width="8" height="5" class="surf-car" color="#666"><use href="#caret"/></svg>
</div></div>
<div class="rgroup g-graph flex-shrink-0"><h2>Graphics</h2><div class="rgrid">
<button><svg width="18" height="18"><use href="#r-mesh"/></svg>Mesh<svg class="car" width="8" height="5" color="#666"><use href="#caret"/></svg></button>
<button><svg width="18" height="18"><use href="#r-cont"/></svg>Contours<svg class="car" width="8" height="5" color="#666"><use href="#caret"/></svg></button>
<button><svg width="18" height="18"><use href="#r-vec"/></svg>Vectors<svg class="car" width="8" height="5" color="#666"><use href="#caret"/></svg></button>
<button><svg width="18" height="18"><use href="#r-path"/></svg>Pathlines<svg class="car" width="8" height="5" color="#666"><use href="#caret"/></svg></button>
<button><svg width="18" height="18"><use href="#r-part"/></svg>Particle Tracks<svg class="car" width="8" height="5" color="#666"><use href="#caret"/></svg></button>
<button><svg width="18" height="18"><use href="#r-folder"/></svg>HSF File...</button>
<button><svg width="18" height="18"><use href="#r-vec"/></svg>LICs<svg class="car" width="8" height="5" color="#666"><use href="#caret"/></svg></button>
<button><svg width="18" height="18"><use href="#r-dash"/></svg>Dashboard...</button>
</div></div>
<div class="rgroup g-plot flex-shrink-0"><h2>Plots</h2><div class="rgrid">
<button><svg width="18" height="18"><use href="#r-xy"/></svg>XY Plot<svg class="car" width="8" height="5" color="#666"><use href="#caret"/></svg></button>
<button><svg width="18" height="18"><use href="#r-hist"/></svg>Histogram...</button>
<button><svg width="18" height="18"><use href="#r-res"/></svg>Residuals...</button>
<button><svg width="18" height="18"><use href="#r-data"/></svg>Data Sources...</button>
<button><svg width="18" height="18" color="#cc920f"><use href="#r-fft"/></svg>FFT...</button>
<button><svg width="18" height="18"><use href="#r-prof"/></svg>Profile Data...</button>
<button><svg width="18" height="18"><use href="#r-interp"/></svg>Interpolated Data...</button>
<button disabled><svg width="18" height="18"><use href="#r-react"/></svg>Reacting Channel...</button>
<button><svg width="18" height="18"><use href="#r-cum"/></svg>Cumulative Plot<svg class="car" width="8" height="5" color="#666"><use href="#caret"/></svg></button>
</div></div>
<div class="rgroup g-rep flex-shrink-0"><h2>Reports</h2><div class="rgrid">
<button><svg width="18" height="18"><use href="#r-clip"/></svg>Reference Values...</button>
<button><svg width="18" height="18"><use href="#r-flux"/></svg>Fluxes...</button>
<button><svg width="18" height="18"><use href="#r-force"/></svg>Forces...</button>
<button><svg width="18" height="18"><use href="#r-sint"/></svg>Surface Integrals...</button>
<button><svg width="18" height="18"><use href="#r-vint"/></svg>Volume Integrals...</button>
<button disabled><svg width="18" height="18"><use href="#r-heat"/></svg>Heat Exchanger...</button>
<button disabled><svg width="18" height="18"><use href="#r-zone"/></svg>Zone Motion...</button>
<button><svg width="18" height="18"><use href="#r-proj"/></svg>Projected Areas...</button>
<button disabled><svg width="18" height="18"><use href="#r-eff"/></svg>Efficiency...</button>
</div></div>
<div class="rgroup g-anim flex-shrink-0"><h2>Animation</h2><div class="rgrid">
<button><svg width="18" height="18"><use href="#r-sweep"/></svg>Sweep Surface...</button>
<button><svg width="18" height="18"><use href="#r-clap"/></svg>Scene Animation...</button>
<button><svg width="18" height="18"><use href="#r-film"/></svg>Solution Playback...</button>
<button disabled><svg width="18" height="18" color="#bbb"><use href="#r-fft"/></svg>Inverse DFT...</button>
</div></div>
<div class="rgroup g-model flex-shrink-0"><h2>Model Specific</h2><div class="rgrid">
<button><svg width="18" height="18"><use href="#r-disc"/></svg>Discrete Phase<svg class="car" width="8" height="5" color="#666"><use href="#caret"/></svg></button>
<button disabled><svg width="18" height="18"><use href="#r-turbo"/></svg>Turbo Post<svg class="car" width="8" height="5" color="#999"><use href="#caret"/></svg></button>
<span></span>
<button disabled><svg width="18" height="18"><use href="#r-pie"/></svg>DTRM Graphics...</button>
<button disabled><svg width="18" height="18"><use href="#r-pdf"/></svg>PDF Table...</button>
<button disabled><svg width="18" height="18"><use href="#r-info"/></svg>S2S Information...</button>
</div></div>
</section>

<main class="d-flex flex-grow-1" style="min-height:0">
<section class="outline d-flex flex-column flex-shrink-0">
<div class="panel-head d-flex align-items-center justify-content-between">Outline View<button aria-label="Collapse"><svg width="6" height="10"><use href="#lt"/></svg></button></div>
<div class="outline-strip"></div>
<input class="filter-box" type="text" aria-label="Filter Text" placeholder="Filter Text">
<ul class="tree flex-grow-1">
<li class="top"><button aria-label="Collapse"><svg width="11" height="11"><use href="#minus"/></svg></button>Setup</li>
<li class="l1 leaf"><svg width="12" height="12"><use href="#t-gen"/></svg>General</li>
<li class="l1"><button aria-label="Expand"><svg width="15" height="15"><use href="#plus"/></svg></button><svg width="12" height="12"><use href="#t-cube"/></svg>Models</li>
<li class="l1"><button aria-label="Collapse"><svg width="15" height="15"><use href="#minus"/></svg></button><svg width="16" height="16"><use href="#t-flask"/></svg>Materials</li>
<li class="l2"><button aria-label="Collapse"><svg width="15" height="15"><use href="#minus"/></svg></button><svg width="16" height="16"><use href="#t-flask"/></svg>Fluid</li>
<li class="l3 leaf"><svg width="16" height="16"><use href="#t-flask"/></svg>air</li>
<li class="l3 leaf"><svg width="16" height="16"><use href="#t-flask"/></svg>water-liquid</li>
<li class="l2"><button aria-label="Expand"><svg width="15" height="15"><use href="#plus"/></svg></button><svg width="16" height="16"><use href="#t-flask"/></svg>Solid</li>
<li class="l1"><button aria-label="Collapse"><svg width="15" height="15"><use href="#minus"/></svg></button><svg width="16" height="16"><use href="#t-zone"/></svg>Cell Zone Conditions</li>
<li class="l2"><button aria-label="Collapse"><svg width="15" height="15"><use href="#minus"/></svg></button><svg width="16" height="16"><use href="#t-zone"/></svg>Fluid</li>
<li class="l3 leaf"><svg width="16" height="16"><use href="#t-zone"/></svg>fluid-domain (fluid, id=3)</li>
<li class="l2"><button aria-label="Expand"><svg width="15" height="15"><use href="#plus"/></svg></button><svg width="16" height="16"><use href="#t-zone"/></svg>Solid</li>
<li class="l1"><button aria-label="Collapse"><svg width="15" height="15"><use href="#minus"/></svg></button><svg width="16" height="16"><use href="#t-bound"/></svg>Boundary Conditions</li>
<li class="l2"><button aria-label="Collapse"><svg width="15" height="15"><use href="#minus"/></svg></button><svg width="16" height="16"><use href="#t-in"/></svg>Inlet</li>
<li class="l3 leaf"><svg width="16" height="16"><use href="#t-in"/></svg>inlet (velocity-inlet, id=7)</li>
<li class="l2"><button aria-label="Collapse"><svg width="15" height="15"><use href="#minus"/></svg></button><svg width="16" height="16"><use href="#t-intf"/></svg>Interface</li>
<li class="l3"><button aria-label="Collapse"><svg width="15" height="15"><use href="#minus"/></svg></button><svg width="16" height="16"><use href="#t-intf"/></svg>wall-fluid-solid-contact_region-trg (interfa</li>
<li class="l4 leaf"><svg width="16" height="16"><use href="#t-wall"/></svg>wall-13 (wall, id=13)</li>
<li class="l3"><button aria-label="Collapse"><svg width="15" height="15"><use href="#minus"/></svg></button><svg width="16" height="16"><use href="#t-intf"/></svg>wall-solid-fluid-contact_region-src (interfa</li>
<li class="l4 leaf"><svg width="16" height="16"><use href="#t-wall"/></svg>wall-12 (wall, id=12)</li>
<li class="l2"><button aria-label="Expand"><svg width="15" height="15"><use href="#plus"/></svg></button><svg width="16" height="16"><use href="#t-bound"/></svg>Internal</li>
<li class="l2"><button aria-label="Expand"><svg width="15" height="15"><use href="#plus"/></svg></button><svg width="16" height="16"><use href="#t-out"/></svg>Outlet</li>
<li class="l2"><button aria-label="Expand"><svg width="15" height="15"><use href="#plus"/></svg></button><svg width="16" height="16"><use href="#t-wall"/></svg>Wall</li>
<li class="l1"><button aria-label="Expand"><svg width="15" height="15"><use href="#plus"/></svg></button><svg width="16" height="16"><use href="#t-mi"/></svg>Mesh Interfaces</li>
<li class="l1 leaf"><svg width="16" height="16"><use href="#t-aux"/></svg>Auxiliary Geometry Definitions</li>
<li class="l1 leaf"><svg width="16" height="16"><use href="#t-dyn"/></svg>Dynamic Mesh</li>
<li class="l1 leaf"><svg width="16" height="16"><use href="#t-clip"/></svg>Reference Values</li>
<li class="l1"><button aria-label="Expand"><svg width="15" height="15"><use href="#plus"/></svg></button><svg width="16" height="16"><use href="#t-frame"/></svg>Reference Frames</li>
<li class="l1 leaf"><svg width="16" height="16"><use href="#t-fx"/></svg>Named Expressions</li>
<li class="l1 leaf"><svg width="16" height="16"><use href="#t-zone"/></svg>Curvilinear Coordinate System</li>
<li class="top"><button aria-label="Collapse"><svg width="11" height="11"><use href="#minus"/></svg></button>Solution</li>
<li class="l1 leaf"><svg width="16" height="16"><use href="#t-gears"/></svg>Methods</li>
<li class="l1 leaf"><svg width="16" height="16"><use href="#t-tools"/></svg>Controls</li>
<li class="l1"><button aria-label="Collapse"><svg width="15" height="15"><use href="#minus"/></svg></button><svg width="16" height="16"><use href="#t-rep"/></svg>Report Definitions</li>
<li class="l2 leaf"><svg width="16" height="16"><use href="#t-rep"/></svg>report-force</li>
<li class="l2 leaf"><svg width="16" height="16"><use href="#t-rep"/></svg>report-moment-y</li>
<li class="l2 leaf"><svg width="16" height="16"><use href="#t-rep"/></svg>report-moment-z</li>
<li class="l1"><button aria-label="Expand"><svg width="15" height="15"><use href="#plus"/></svg></button><svg width="16" height="16"><use href="#t-mon"/></svg>Monitors</li>
<li class="l1 leaf"><svg width="16" height="16"><use href="#t-cell"/></svg>Cell Registers</li>
<li class="l1 leaf"><svg width="16" height="16"><use href="#t-ama"/></svg>Automatic Mesh Adaption</li>
<li class="l1 leaf"><svg width="16" height="16"><use href="#t-init"/></svg>Initialization</li>
<li class="l1"><button aria-label="Expand"><svg width="15" height="15"><use href="#plus"/></svg></button><svg width="12" height="12"><use href="#t-act"/></svg>Calculation Activities</li>
<li class="l1 leaf"><svg width="16" height="16"><use href="#t-run"/></svg>Run Calculation</li>
<li class="top"><button aria-label="Collapse"><svg width="11" height="11"><use href="#minus"/></svg></button>Results</li>
<li class="l1 leaf"><svg width="16" height="16"><use href="#t-surf"/></svg>Surfaces</li>
<li class="l1"><button aria-label="Expand"><svg width="15" height="15"><use href="#plus"/></svg></button><svg width="12" height="12"><use href="#t-graph"/></svg>Graphics</li>
<li class="l1"><button aria-label="Expand"><svg width="15" height="15"><use href="#plus"/></svg></button><svg width="16" height="16"><use href="#t-plot"/></svg>Plots</li>
<li class="l1 leaf"><svg width="16" height="16"><use href="#t-scene"/></svg>Scene</li>
<li class="l1 leaf"><svg width="16" height="16"><use href="#t-dash"/></svg>Dashboard</li>
<li class="l1"><button aria-label="Expand"><svg width="15" height="15"><use href="#plus"/></svg></button><svg width="16" height="16"><use href="#t-anim"/></svg>Animations</li>
<li class="l1"><button aria-label="Expand"><svg width="15" height="15"><use href="#plus"/></svg></button><svg width="16" height="16"><use href="#t-table"/></svg>Reports</li>
<li class="top"><button aria-label="Expand"><svg width="11" height="11"><use href="#plus"/></svg></button>Parameters &amp; Customization</li>
<li class="top"><button aria-label="Expand"><svg width="11" height="11"><use href="#plus"/></svg></button>Simulation Reports</li>
</ul>
<div class="hscroll d-flex"><button aria-label="Scroll left"><svg width="6" height="10"><path d="M6 0v10L0 5z" fill="#5f6c77"/></svg></button><div class="thumb-x"></div><button class="ms-auto" aria-label="Scroll right"><svg width="6" height="10"><path d="M0 0v10l6-5z" fill="#5f6c77"/></svg></button></div>
</section>

<section class="d-flex flex-column flex-grow-1" style="min-width:0">
<div class="d-flex flex-grow-1" style="min-height:0">
<div class="toolcol d-flex flex-column flex-shrink-0 overflow-hidden">
<div class="grip"></div>
<button aria-label="Mesh display"><svg width="24" height="24"><use href="#r-mesh"/></svg></button>
<button aria-label="Box"><svg width="20" height="20"><path d="M1 7l6-6v12l-6 6z" fill="#dda52a"/><path d="M1 19l6-6h12l-6 6z" fill="#cc920f"/><path d="M7 1h12v12l-6 6H1V7zM7 1v12h12M1 19l6-6" fill="none" stroke="#111" stroke-width="1.300"/><path d="M1 7h12v12M13 7l6-6" fill="none" stroke="#111" stroke-dasharray="1 2"/></svg></button>
<div class="grip"></div>
<button class="active" aria-label="Select"><svg width="20" height="20"><path d="M5 1v14l3-3 3 7 3-1-3-7h4z" fill="#cc920f" stroke="#6b6b6b"/></svg></button>
<button aria-label="Rotate"><svg width="18" height="18"><path d="M2 7a7.500 7.500 0 0 1 14-1" fill="none" stroke="#cc920f" stroke-width="1.500"/><path d="M16 11a7.500 7.500 0 0 1-14 1" fill="none" stroke="#333" stroke-width="1.500"/><path d="M0 5l2 4 3-3z" fill="#cc920f"/><path d="M18 13l-2-4-3 3z" fill="#222"/></svg></button>
<button aria-label="Pan"><svg width="18" height="18"><path d="M9 3v12M3 9h12" stroke="#e0ad3a" stroke-width="2"/><path d="M7 3l2-2 2 2zM7 15l2 2 2-2zM3 7L1 9l2 2zM15 7l2 2-2 2z" fill="#111" stroke="#111"/><circle cx="9" cy="9" r="1.500" fill="#fff"/></svg></button>
<button aria-label="Zoom in and out"><svg width="24" height="18"><circle cx="12" cy="8" r="5.500" fill="none" stroke="#cc920f" stroke-width="1.500"/><path d="M16 12l3 4M1 9h5M19 9h5M21.500 7v4" stroke="#333" stroke-width="1.800"/></svg></button>
<button aria-label="Zoom"><svg width="18" height="18"><circle cx="8.500" cy="8.500" r="6" fill="none" stroke="#cc920f" stroke-width="1.500"/><path d="M13 13l3 4" stroke="#333" stroke-width="1.800"/></svg></button>
<button aria-label="Probe"><svg width="20" height="20"><circle cx="10" cy="10" r="8" fill="none" stroke="#444" stroke-width="1.400"/><path d="M10 9v6M10 5v2" stroke="#cc920f" stroke-width="2.200"/></svg></button>
<div class="grip"></div>
<button aria-label="Projection"><svg width="20" height="20"><path d="M1 1l11 4v9L1 18z" fill="#111" stroke="#cc920f"/><path d="M5 3v14M9 4v11M1 9h11M13 11h3M11 14h6M3 18h17" stroke="#cc920f" stroke-width="1.200"/></svg></button>
<button aria-label="Fit"><svg width="18" height="18"><circle cx="8.500" cy="8.500" r="6.500" fill="none" stroke="#cc920f" stroke-width="1.500"/><path d="M5.500 5.500h6v6h-6z" fill="none" stroke="#444"/><path d="M13 13l3 4" stroke="#333" stroke-width="1.800"/></svg></button>
<button aria-label="Previous view"><svg width="18" height="18"><circle cx="8.500" cy="8.500" r="6.500" fill="none" stroke="#cc920f" stroke-width="1.500"/><path d="M5 8.500h7M8 6L5 8.500 8 11" fill="none" stroke="#cc920f" stroke-width="1.500"/></svg></button>
</div>

<div class="d-flex flex-column flex-grow-1" style="min-width:0">
<div class="vtabs d-flex flex-shrink-0">
<div class="vtab active d-flex align-items-center"><svg width="16" height="16" color="#d19a1a"><use href="#logo"/></svg><span class="ttl">Mesh</span><button aria-label="Close Mesh"><svg width="12" height="12"><use href="#xb"/></svg></button></div>
<div class="vtab d-flex align-items-center"><svg width="16" height="16" color="#888"><use href="#logo"/></svg><span class="ttl">Scaled Residuals</span><button aria-label="Close tab"><svg width="12" height="12"><use href="#xb"/></svg></button></div>
<div class="vtab d-flex align-items-center"><svg width="16" height="16" color="#888"><use href="#logo"/></svg><span class="ttl">report-moment-z-rplot</span><button aria-label="Close tab"><svg width="12" height="12"><use href="#xb"/></svg></button></div>
<div class="vtab d-flex align-items-center"><svg width="16" height="16" color="#888"><use href="#logo"/></svg><span class="ttl">report-moment-y-rplot</span><button aria-label="Close tab"><svg width="12" height="12"><use href="#xb"/></svg></button></div>
<div class="vtab d-flex align-items-center"><svg width="16" height="16" color="#888"><use href="#logo"/></svg><span class="ttl">report-force-rplot</span><button aria-label="Close tab"><svg width="12" height="12"><use href="#xb"/></svg></button></div>
</div>
<svg class="scene" viewBox="433 236 2086 974" preserveAspectRatio="xMidYMid slice" role="img" aria-label="3D view">
<path fill="url(#sky)" d="M433 236h2086v974H433z"/>
<path fill="url(#pln)" d="M1268 236h174v974h-174z"/>
<!-- ground grid -->
<g stroke="#505050" stroke-opacity=".27" stroke-width="1.500" fill="none">
<path d="M433 967.500h2086M433 978.500h2086M433 990.500h2086M433 1004.500h2086M433 1019.500h2086M433 1035.500h2086M433 1053.500h2086M433 1074.500h2086M433 1098h2086M433 1125.500h2086M433 1156h2086M433 1192.500h2086"/>
<path d="M1406 967.500L1339 1210M1256 967.500L1040 1210M1106 967.500L741 1210M956 967.500L442 1210M806 967.500L144 1210M656 967.500L-155 1210M506 967.500L-453 1210M1556 967.500L1638 1210M1706 967.500L1936 1210M1856 967.500L2234 1210M2006 967.500L2533 1210M2156 967.500L2831 1210M2305 967.500L3130 1210M2455 967.500L3428 1210"/>
</g>
<!-- segmented body -->
<path fill="url(#cyd)" d="M1397 267c2-7 27-7 29 0l-2 62c-3 9-27 9-29 0z"/>
<ellipse cx="1409.500" cy="333" rx="14.500" ry="11" fill="#c2bf49"/><ellipse cx="1409.500" cy="331" rx="10" ry="5" fill="#8a8330"/><path fill="url(#rod)" d="M1405 328h9v18h-9z"/>
<path fill="url(#cy)" d="M1394 349c3-7 27-7 30 0l-2 243c-3 11-28 11-31 0z"/>
<ellipse cx="1406" cy="593" rx="15" ry="7" fill="#8f8834"/><ellipse cx="1406" cy="591" rx="11" ry="4" fill="#6b6522"/><path fill="url(#rod)" d="M1402 589h8v26h-8z"/>
<path fill="url(#cy)" d="M1390 616q16-3 32 0v278q-16 4-32 0z"/>
<path fill="url(#rod)" d="M1402 896h8v22h-8z"/>
<path fill="url(#cyd)" d="M1391 918l31 0 2 243c-3 5-26 5-29 0z"/><ellipse cx="1406.500" cy="918" rx="15.500" ry="8" fill="#c9c64c"/><ellipse cx="1406.500" cy="916" rx="14" ry="6" fill="#938c38"/><path fill="url(#rod)" d="M1402 898h8v20h-8z"/>
<path fill="url(#cyd)" d="M1395 1175h29l1 35h-29z"/><ellipse cx="1409.500" cy="1174" rx="14.500" ry="10" fill="#cfcc4e"/><ellipse cx="1409.500" cy="1177" rx="8" ry="4" fill="#8f8834"/><path fill="url(#rod)" d="M1405 1165h9v14h-9z"/>
<!-- normal arrow -->
<path fill="url(#red)" d="M1314 748l29-8v4h48v9h-48v4z"/><path fill="#f0823f" d="M1391 744h27v8h-27z"/>
<!-- watermark -->
<g font-family="Open Sans" font-weight="700" fill="#000"><text x="2328" y="295" font-size="60">Λnsys</text><text x="2507" y="333" font-size="29" text-anchor="end">2024 R1</text><text x="2412" y="380" font-size="31" font-weight="800" text-anchor="middle">STUDENT</text></g>
<path d="M2327 345h178" stroke="#444" stroke-width="2"/>
<!-- orientation triad -->
<circle cx="2361" cy="1080" r="6.500" fill="url(#teal)"/>
<g fill="#00c"><circle cx="2399" cy="1104" r="6"/><circle cx="2399" cy="1131" r="6"/></g><g fill="#c00"><circle cx="2386" cy="1118" r="6.500"/><circle cx="2412" cy="1118" r="6.500"/></g>
<path d="M2385 1132v-28h28v28" fill="#fff" stroke="#555" stroke-width="1.500"/>
<path d="M2386 1105h26v27h-26z" fill="#fff"/>
<circle cx="2399" cy="1118" r="6.500" fill="#0a7a18"/>
<path d="M2397 1095v-14h-3l5-12 5 12h-3v14z" fill="#1414d0"/><path d="M2377 1116h-12v-3l-14 5 14 5v-3h12z" fill="#c81414"/>
<g font-family="Liberation Sans" font-size="21" text-anchor="middle"><text x="2399" y="1073" fill="#00f">Z</text><text x="2347" y="1125" fill="#f00">X</text><text x="2399" y="1124" font-size="17" fill="#0e0">Y</text></g>
<g fill="#fff" stroke="#333"><path d="M2449 1154c5-8 8-16 9-23l-3 0 7-14 4 15-4-1c-2 10-5 17-10 25z"/><path d="M2434 1168c-7 5-14 8-21 9l0-3-14 7 14 3 0-3c8-1 16-5 24-10z"/></g>
</svg>
</div>

<div class="toolcol rightcol d-flex flex-column flex-shrink-0">
<div class="grip"></div>
<button aria-label="Reflections"><svg width="22" height="22"><ellipse cx="11" cy="5" rx="9" ry="4" fill="#cc920f" stroke="#777"/><path d="M1 11h20" stroke="#555"/><ellipse cx="11" cy="16" rx="8" ry="4" fill="#ecd293"/></svg></button>
<button aria-label="Shadows"><svg width="22" height="22"><path d="M10 19c-1-7 3-12 11-13 1 6-5 11-11 13z" fill="#555"/><ellipse cx="7" cy="10.500" rx="5" ry="9" fill="#cc920f" stroke="#888"/></svg></button>
<button aria-label="Background"><svg width="24" height="24"><path d="M0 7L7 0M0 15L15 0M0 23L23 0M8 23L23 8M16 23l7-7M0 16l7 7M0 8l15 15M0 0l23 23M8 0l15 15M16 0l7 7" stroke="#bdbdbd"/><ellipse cx="12" cy="12" rx="5" ry="9" fill="#cc920f" stroke="#777"/></svg></button>
<div class="grip"></div>
<button aria-label="Show"><svg width="20" height="18"><path d="M1 10c5-7 13-7 18 0-5 7-13 7-18 0z" fill="none" stroke="#222" stroke-width="1.300"/><circle cx="10" cy="10" r="2.500" fill="#cc920f"/><path d="M10 0v3M2 2l2 3M18 2l-2 3" stroke="#222"/></svg></button>
<button aria-label="Hide"><svg width="20" height="18"><path d="M1 10c5-7 13-7 18 0-5 7-13 7-18 0z" fill="none" stroke="#222" stroke-width="1.300"/><circle cx="10" cy="10" r="2.500" fill="none" stroke="#222"/><path d="M10 0v3M2 2l2 3" stroke="#222"/><path d="M3 17L18 3" stroke="#cc920f" stroke-width="2"/></svg></button>
<button aria-label="Isolate"><svg width="20" height="20"><path d="M1 1h15v15H1z" fill="none" stroke="#333" stroke-width="1.500"/><path d="M5 5h15v14H5z" fill="#cc920f"/></svg></button>
<button aria-label="Undo visibility"><svg width="20" height="20"><path d="M3 7V2h16v16h-6" fill="none" stroke="#cc920f" stroke-width="1.300" stroke-dasharray="2 1"/><path d="M2 9c7-1 10 2 10 9" fill="none" stroke="#222" stroke-width="1.500"/><path d="M0 9l4-3v5z" fill="#222"/></svg></button>
<div class="grip"></div>
<button aria-label="Axes"><svg width="20" height="20"><path d="M4 3v13h13M4 16l9-7" fill="none" stroke="#222" stroke-width="1.500"/><path d="M2 4l2-4 2 4zM16 14l4 2-4 2z" fill="#cc920f"/><circle cx="13.500" cy="8.500" r="1.700" fill="#cc920f"/></svg></button>
<button aria-label="Ruler"><svg width="22" height="8"><rect x=".5" y="1.500" width="21" height="5" rx="2.500" fill="#fff" stroke="#888"/><path d="M3 1h9v6H3a3 3 0 0 1 0-6z" fill="#cc920f" stroke="#8a6d2a"/></svg></button>
<button aria-label="Title block"><svg width="20" height="20"><path d="M2 2h12l4 5v11H2z" fill="none" stroke="#333" stroke-width="1.500"/><path d="M5 6h8" stroke="#cc920f" stroke-width="1.600"/><path d="M5 10.500h6M5 14h6" stroke="#333" stroke-width="1.300"/></svg></button>
<button aria-label="Boundary marks"><svg width="22" height="16"><path d="M2 2h6v12H2z" fill="#111"/><path d="M2 3l3-2h6v10l-3 3" fill="none" stroke="#cc920f"/><path d="M14 6h8M14 10h8" stroke="#111" stroke-width="1.300"/><path d="M12 6l4-2v4zM12 10l4-2v4z"/></svg></button>
<div class="grip"></div>
<button aria-label="Copy"><svg width="18" height="18"><path d="M3 15V2h11" fill="none" stroke="#111" stroke-width="2.200"/><path d="M6 5h10v12H6z" fill="#fff" stroke="#cc920f" stroke-width="1.300"/></svg></button>
<button aria-label="Save picture"><svg width="20" height="18"><path d="M1.500 3.500h5l2-2h3l2 2h5v12h-17z" fill="#fff" stroke="#cc920f" stroke-width="1.300"/><circle cx="10" cy="9.500" r="3" fill="#111"/></svg></button>
</div>
</div>

<div class="statusrow d-flex align-items-center flex-shrink-0"><div class="gripv"></div><label class="ms-auto" for="selFilter">0 selected</label><select id="selFilter" class="plain-select"><option>all</option></select></div>

<section class="console d-flex flex-column flex-shrink-0">
<div class="panel-head d-flex align-items-center ps-2">Console<button class="ms-auto me-2" aria-label="Undock"><svg width="11" height="11"><rect x=".5" y=".5" width="10" height="10" rx="2" fill="none" stroke="#555"/><path d="M3 5h3v3H3zM5 3h3v3" fill="none" stroke="#555"/></svg></button><button aria-label="Collapse"><svg width="6" height="10"><use href="#lt"/></svg></button></div>
<div class="console-body d-flex flex-grow-1">
<pre class="flex-grow-1">    omega
    hyb_init-0
    hyb_init-1
Done.

Calculation complete.</pre>
<button class="msg-btn msg-warn" aria-label="Warnings"><svg width="15" height="14"><path d="M7.500 1L14 13H1z" fill="none" stroke="#cc920f" stroke-width="1.300"/><path d="M7.500 5v4M7.500 10v2" stroke="#444" stroke-width="1.500"/></svg></button>
<button class="msg-btn msg-info" aria-label="Messages"><svg width="16" height="16"><circle cx="8" cy="8" r="6.500" fill="#fff" stroke="#444"/><path d="M8 4v5M8 10v2" stroke="#e0ad3a" stroke-width="1.500"/></svg></button>
<div><div class="vscroll d-flex flex-column"><button aria-label="Scroll up"><svg width="9" height="6"><path d="M0 6h9L4.500 0z"/></svg></button><div class="thumb-y"></div><button aria-label="Scroll down"><svg width="9" height="6"><path d="M0 0h9L4.500 6z"/></svg></button></div><input class="tickbox d-block" type="checkbox" checked aria-label="Follow output"></div>
</div>
</section>
</section>
</main>
</div>
</div>

<section class="dlg" role="dialog" aria-label="Plane Surface">
<div class="dlg-title d-flex align-items-center"><svg width="16" height="16" color="#d19a1a"><use href="#logo"/></svg>Plane Surface<button class="ms-auto" aria-label="Close"><svg width="12" height="12"><use href="#x"/></svg></button></div>
<div class="dlg-body">
<label for="sname">New Surface Name</label><input id="sname" class="plain-field" type="text" value="plane-9">
<label class="lbl" for="meth">Method</label>
<div class="boxed box-method"><select id="meth" class="plain-select"><option>YZ Plane</option></select></div>
<div class="boxed box-x d-flex align-items-end"><div><label for="xm">X [m]</label><input id="xm" class="plain-field digits" type="text" value="0.01409683"></div><button class="dbtn w-mouse">Select with Mouse</button></div>
<label for="cnt">Surfaces</label><input id="cnt" class="plain-field spin" type="number" value="1">
<button class="dbtn w-reset">Reset</button>
<hr>
<div class="d-flex gap-2 justify-content-center"><button class="dbtn prime w-create">Create</button><button class="dbtn w-close">Close</button><button class="dbtn w-help">Help</button></div>
</div>
</section>
</body>
</html>
